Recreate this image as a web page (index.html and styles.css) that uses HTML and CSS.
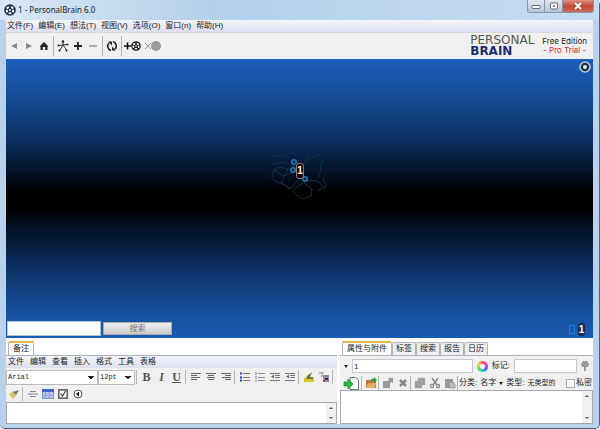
FILE: index.html
```html
<!DOCTYPE html>
<html>
  <head>
    <title>1 - PersonalBrain 6.0</title>
    <meta charset="utf-8">
    <link rel="stylesheet" href="styles.css">
  </head>
  <body>
    <svg class="defs" width="0" height="0">
      <symbol id="brain" viewBox="0 0 12 12">
        <circle cx="6" cy="6" r="5.8" fill="currentColor"/>
        <g fill="#fff">
          <ellipse cx="3.8" cy="3.6" rx="1.5" ry="1.1" transform="rotate(-35 3.8 3.6)"/>
          <ellipse cx="8.2" cy="3.6" rx="1.5" ry="1.1" transform="rotate(35 8.2 3.6)"/>
          <ellipse cx="2.9" cy="7" rx="1.1" ry="1.5"/>
          <ellipse cx="9.1" cy="7" rx="1.1" ry="1.5"/>
          <ellipse cx="6" cy="9.3" rx="1.6" ry="1"/>
          <circle cx="6" cy="6" r="1"/>
        </g>
      </symbol>
      <symbol id="align-left" viewBox="0 0 10 10"><path d="M0 1.5h10M0 3.5h6M0 5.5h9M0 7.5h6" stroke="#666"/></symbol>
      <symbol id="align-center" viewBox="0 0 10 10"><path d="M0 1.5h10M2 3.5h6M1 5.5h8M2 7.5h6" stroke="#666"/></symbol>
      <symbol id="align-right" viewBox="0 0 10 10"><path d="M0 1.5h10M4 3.5h6M1 5.5h9M4 7.5h6" stroke="#666"/></symbol>
      <symbol id="indent" viewBox="0 0 10 10">
        <path d="M0 1.5h10M5 3.5h5M5 5.5h5M0 8.5h10" stroke="#777"/>
        <path d="M4 2.5v4L1 4.5z" fill="#667"/>
      </symbol>
    </svg>

    <div class="window">
      <header class="titlebar">
        <svg class="logo" width="12" height="12"><use href="#brain"/></svg>
        <h1>1 - PersonalBrain 6.0</h1>
        <div class="window-buttons">
          <button class="minimize" aria-label="Minimize"><svg width="10" height="6"><rect x="1" y="2.5" width="8" height="3" rx="1" fill="#fff" stroke="#667"/></svg></button>
          <button class="maximize" aria-label="Maximize"><svg width="10" height="8"><rect x="1.5" y="1" width="7" height="6" rx="1" fill="#fff" stroke="#667"/><rect x="4" y="3" width="2" height="2" fill="#889"/></svg></button>
          <button class="close" aria-label="Close"><svg width="10" height="8"><path d="M2 1l6 6M8 1L2 7" stroke="#844" stroke-width="3"/><path d="M2 1l6 6M8 1L2 7" stroke="#fff" stroke-width="2"/></svg></button>
        </div>
      </header>

      <div class="client">
        <nav class="menubar main-menu">
          <button>文件(F)</button>
          <button>编辑(E)</button>
          <button>想法(T)</button>
          <button>视图(V)</button>
          <button>选项(O)</button>
          <button>窗口(n)</button>
          <button>帮助(H)</button>
        </nav>

        <div class="toolbar main-toolbar">
          <button aria-label="Back"><svg width="8" height="8"><path d="M7 1v6L1 4z" fill="#888"/></svg></button>
          <button aria-label="Forward"><svg width="8" height="8"><path d="M1 1v6l6-3z" fill="#888"/></svg></button>
          <button aria-label="Home"><svg width="10" height="10"><path d="M5 1l4.500 4.500H8.500V9H6.200V6H3.800V9H1.500V5.500H.5z" fill="#222"/></svg></button>
          <span class="sep"></span>
          <button aria-label="Layout"><svg width="12" height="12" fill="none" stroke="#333"><path d="M6 2v3L2 5.500M6 5l4.500-.5M6 5L3 10M6 5l3.500 5"/><g fill="#222" stroke="none"><circle cx="6" cy="1.500" r="1.200"/><circle cx="1.500" cy="5.500" r="1"/><circle cx="10.500" cy="4.500" r="1"/><circle cx="2.500" cy="10.500" r="1"/><circle cx="9.500" cy="10.500" r="1"/></g></svg></button>
          <button aria-label="Add thought"><svg width="10" height="10"><path d="M5 1v8M1 5h8" stroke="#222" stroke-width="1.800"/></svg></button>
          <button aria-label="Remove thought"><svg width="10" height="10"><path d="M1 5h8" stroke="#999" stroke-width="1.500"/></svg></button>
          <span class="sep"></span>
          <button aria-label="Refresh"><svg width="12" height="12"><path d="M5 10.500C1 9 1 5 3 3M7 1.500c4 1.500 4 5.500 2 7.500" fill="none" stroke="#222" stroke-width="1.600"/><path d="M2 1.500h4V5.500zM10 10.500H6V6.500z" fill="#222"/></svg></button>
          <span class="sep"></span>
          <button class="wide" aria-label="Add brain"><svg width="18" height="12"><path d="M3.500 2.500v7M0 6h7" stroke="#111" stroke-width="1.600"/><use href="#brain" x="7" y="1" width="10" height="10" color="#222"/></svg></button>
          <button class="wide" aria-label="Remove brain"><svg width="18" height="12"><path d="M1 3l6 6M7 3L1 9" stroke="#999"/><circle cx="12" cy="6" r="5" fill="#999"/><path d="M9 4.500h2M13 4h2M10 8h4" stroke="#aaa"/></svg></button>
          <div class="brand">
            <div class="brand-name"><span class="personal">PERSONAL</span><strong>BRAIN</strong></div>
            <div class="edition">Free Edition<span>- Pro Trial -</span></div>
          </div>
        </div>

        <main class="plex">
          <svg class="graph" viewBox="0 0 62 56" width="62" height="56">
            <g fill="none" stroke="#0f3a52" stroke-width="0.8">
              <path d="M3 12c6-3 10 1 15-2s8-3 10 2M4 19l14-2 10 5M4 32c1-8 4-12 16-8M4 33c5 7 11 3 18 11M20 24l-7 14 9 6 8-9M6 24l9 7 12-4"/>
              <path d="M35 20l5-9M38 16c4-4 9-4 15-7M55 14c-5 8 0 10-5 18M55 33l3 8-9 5M37 35l13 1 7 8M35 38c-5 3-8 5-10 9l9 7 9-3 1-7-8-6"/>
            </g>
            <g fill="#06243f" stroke="#1d7ab5" stroke-width="1.500">
              <circle cx="26" cy="17" r="2.300"/><circle cx="25" cy="25" r="2.300"/><circle cx="37" cy="34" r="2.300"/>
            </g>
          </svg>
          <button class="thought">1</button>
          <button class="options" aria-label="Options"><svg width="12" height="12"><circle cx="6" cy="6" r="5" fill="#234" stroke="#bcc6d4" stroke-width="1.600"/><circle cx="6" cy="6" r="2" fill="#dde6f0"/></svg></button>
          <form class="search">
            <input type="text" aria-label="搜索">
            <button type="button">搜索</button>
          </form>
          <div class="history"><span class="pin"></span><button>1</button></div>
        </main>

        <div class="panels">
          <section class="notes">
            <div class="tabs"><button class="active">备注</button></div>
            <nav class="menubar notes-menu">
              <button>文件</button>
              <button>编辑</button>
              <button>查看</button>
              <button>插入</button>
              <button>格式</button>
              <button>工具</button>
              <button>表格</button>
            </nav>
            <div class="toolbar format-bar">
              <select class="font" aria-label="Font"><option>Arial</option></select>
              <select class="size" aria-label="Size"><option>12pt</option></select>
              <span class="sep"></span>
              <button class="letter"><b>B</b></button>
              <button class="letter"><b><i>I</i></b></button>
              <button class="letter"><b><u>U</u></b></button>
              <span class="sep"></span>
              <button aria-label="Left"><svg width="10" height="10"><use href="#align-left"/></svg></button>
              <button aria-label="Center"><svg width="10" height="10"><use href="#align-center"/></svg></button>
              <button aria-label="Right"><svg width="10" height="10"><use href="#align-right"/></svg></button>
              <span class="sep"></span>
              <button aria-label="Bullets"><svg width="10" height="10"><path d="M3 1.500h7M3 5.500h7M3 8.500h7" stroke="#777"/><path d="M0 1.500h2M0 5.500h2M0 8.500h2" stroke="#2440b0" stroke-width="2"/></svg></button>
              <button aria-label="Numbers"><svg width="10" height="10"><path d="M3 1.500h7M3 5.500h7M3 8.500h7" stroke="#888"/><path d="M1 0v3M1 4v3M1 8v2" stroke="#5a74c4"/></svg></button>
              <button aria-label="Outdent"><svg width="10" height="10"><use href="#indent"/></svg></button>
              <button aria-label="Indent"><svg width="10" height="10"><use href="#indent"/></svg></button>
              <span class="sep"></span>
              <button aria-label="Highlight"><svg width="12" height="12"><path d="M1 7h10v4H1z" fill="#d6c624"/><path d="M3 8l1-3 5-4-2 5h3v2z" fill="#7d7427"/></svg></button>
              <button aria-label="Text colour"><svg width="12" height="12"><path d="M1 1h5v1.500H4.500V6H3V2.500H1z" fill="#aaa"/><path d="M5 4h6v7H5z" fill="#8b8ba0"/><path d="M5 9h2v2H5z" fill="#c33"/><path d="M7 7h3v2H7z" fill="#226"/></svg></button>
              <span class="sep"></span>
            </div>
            <div class="toolbar format-bar second">
              <button aria-label="Format painter"><svg width="12" height="12"><path d="M1 6l4-3 4 4-4 4z" fill="#d5c66a"/><path d="M5 4l3 3 3-5z" fill="#75746a"/></svg></button>
              <span class="sep"></span>
              <button aria-label="Rule"><svg width="10" height="10"><path d="M2 2.500h6M0 5h10M2 7.500h6" stroke="#888"/></svg></button>
              <button aria-label="Table"><svg width="12" height="10"><rect x=".5" y=".5" width="11" height="9" fill="#b9c8f4" stroke="#7890d8"/><path d="M0 0h12v3H0z" fill="#3e66c8"/><path d="M3.500 3v7M7.500 3v7M0 6.500h12" stroke="#91a3da"/></svg></button>
              <button aria-label="Check"><svg width="10" height="10"><path d="M.8.8h8.400v8.400H.8z" fill="#fff" stroke="#333" stroke-width="1.200"/><path d="M2.500 4.500l2 2.500 3-5" fill="none" stroke="#333" stroke-width="1.200"/></svg></button>
              <button aria-label="Sound"><svg width="10" height="10"><circle cx="5" cy="5" r="4" fill="#fff" stroke="#555"/><path d="M6 2.500v5L3 5z" fill="#111"/></svg></button>
            </div>
            <div class="editor"><textarea aria-label="备注"></textarea><span class="scroll"></span></div>
          </section>

          <section class="properties">
            <div class="tabs">
              <button class="active">属性与附件</button>
              <button>标签</button>
              <button>搜索</button>
              <button>报告</button>
              <button>日历</button>
            </div>
            <div class="fields">
              <span class="arrow"></span>
              <input class="name" type="text" value="1" aria-label="名字">
              <span class="wheel"></span>
              <label for="label">标记:</label>
              <input class="label" id="label" type="text">
              <svg width="8" height="12"><path d="M2 1h4l2 3-1 3H5v4H3V7H1L0 4z" fill="#999"/></svg>
            </div>
            <div class="toolbar attach-bar">
              <button class="new" aria-label="New"><svg width="16" height="13"><path d="M7 .5h5.500L15.500 3v9.500H7z" fill="#fff" stroke="#777"/><path d="M1 5h4V2l5 5-5 5V9H1z" fill="#2dbb3c" stroke="#177a22" stroke-width=".7"/></svg></button>
              <span class="sep"></span>
              <button aria-label="Open"><svg width="12" height="12"><path d="M1 3h4l1 1h5v7H1z" fill="#b9783a"/><path d="M1 11l2-5h8l-1 5z" fill="#e0ad62"/><path d="M5 4c1-2 3-3 4-2V0l3 3-3 3V4z" fill="#2f9e3a"/></svg></button>
              <span class="sep"></span>
              <button aria-label="Launch"><svg width="12" height="12"><path d="M1 4h7v7H1zM6 1h5v5L9 5 6 7 5 5l2-2z" fill="#999"/></svg></button>
              <button aria-label="Delete"><svg width="10" height="10"><path d="M2 2l6 6M8 2L2 8" stroke="#888" stroke-width="2.500"/></svg></button>
              <span class="sep"></span>
              <button aria-label="Copy"><svg width="12" height="12"><path d="M4 1h7v7H4zM1 4h7v7H1z" fill="#999" stroke="#bbb" stroke-width=".6"/></svg></button>
              <button aria-label="Cut"><svg width="12" height="12"><path d="M3 1l5 7M9 1L4 8" stroke="#888" stroke-width="1.500"/><circle cx="3" cy="9" r="1.600" fill="none" stroke="#888" stroke-width="1.300"/><circle cx="9" cy="9" r="1.600" fill="none" stroke="#888" stroke-width="1.300"/></svg></button>
              <button aria-label="Paste"><svg width="12" height="12"><path d="M1 2h8v9H1z" fill="#999"/><path d="M5 5h4l2 2v4H5z" fill="#bbb" stroke="#888" stroke-width=".7"/></svg></button>
              <span class="sep"></span>
              <span>分类:</span>
              <button class="sort">名字<span class="arrow"></span></button>
              <span>类型:</span>
              <button class="type">无类型的</button>
              <label class="private"><input type="checkbox">私密</label>
            </div>
            <div class="editor"><textarea aria-label="附件"></textarea><span class="scroll"></span></div>
          </section>
        </div>
      </div>
    </div>
  </body>
</html>
```
FILE: styles.css
```css
* {
  box-sizing: border-box;
}

body {
  margin: 0;
  color: #222;
  font-family: "Liberation Sans", "Noto Sans CJK SC", sans-serif;
  font-size: 8px;
  line-height: 12px;
}

button, input, select, textarea {
  margin: 0;
  padding: 0;
  border: 0;
  color: inherit;
  background: none;
  font: inherit;
}

input, textarea {
  background: #fff;
}

svg {
  display: block;
}

.defs {
  position: absolute;
}

.window {
  display: flex;
  flex-direction: column;
  height: 100vh;
  padding: 0 6px 4px;
  border: 1px solid #456488;
  border-width: 0 1px 1px 0;
  border-radius: 5px;
  background: #b9d1ea;
}

/* title bar */

.titlebar {
  display: flex;
  align-items: center;
  gap: 2px;
  height: 20px;
  margin: 0 -6px;
  padding-left: 4px;
  background: linear-gradient(90deg, #d8e7f5, #b4d1ec 35%, #c4dcf2);
}

.logo {
  color: #1d3050;
}

h1 {
  margin: 0;
  font-family: "Noto Sans", sans-serif;
  font-size: 8px;
  font-weight: normal;
}

.window-buttons {
  display: flex;
  align-self: flex-start;
  margin-left: auto;
  margin-right: 5px;
}

.window-buttons button {
  display: flex;
  align-items: center;
  justify-content: center;
  width: 18px;
  height: 13px;
  border: 1px solid #8796a8;
  border-width: 0 1px 1px 0;
  background: linear-gradient(#dfe8f1, #b4c3d3);
}

.window-buttons .minimize {
  border-left-width: 1px;
  border-radius: 0 0 0 3px;
}

.window-buttons .close {
  width: 31px;
  border-radius: 0 0 3px 0;
  background: linear-gradient(#dd9285, #c44735 50%, #d26a55);
}

.client {
  display: flex;
  flex: 1;
  flex-direction: column;
  min-height: 0;
  background: #fff;
}

/* menus and toolbars */

.menubar {
  display: flex;
  flex: none;
  gap: 6px;
  height: 12px;
  padding-left: 2px;
  background: linear-gradient(#f4f5fa, #dcdfef);
}

.main-menu {
  gap: 5px;
  padding-left: 1px;
}

.toolbar {
  display: flex;
  flex: none;
  align-items: center;
  background: #f0f0f0;
}

.toolbar button {
  display: flex;
  align-items: center;
  justify-content: center;
}

.sep {
  width: 1px;
  height: 14px;
  background: #b4b4b4;
}

.main-toolbar {
  height: 27px;
  padding-right: 6px;
  border-top: 1px solid #d8d8d8;
}

.main-toolbar button {
  width: 15px;
}

.main-toolbar .sep {
  height: 20px;
  margin: 0 1px 0 2px;
}

.main-toolbar .wide {
  width: 20px;
}

.brand {
  display: flex;
  align-items: center;
  gap: 8px;
  margin-left: auto;
}

.brand-name {
  display: flex;
  flex-direction: column;
  font-family: "DejaVu Sans", sans-serif;
  font-size: 12px;
  line-height: 11px;
}

.personal {
  color: #555;
}

.brand strong {
  color: #1b2c74;
}

.edition {
  font-family: Inter, sans-serif;
  line-height: 9px;
  text-align: center;
}

.edition span {
  display: block;
  color: #d02b35;
}

/* plex */

.plex {
  display: grid;
  position: relative;
  flex: 1;
  background: linear-gradient(#1c5fb9, #184f9c 12%, #0b2f60 29%, #04142a 40%, #000 47%, #000 54%, #04142a 62%, #0b2f60 74%, #184f9c 90%, #1c5ab0);
}

.graph {
  position: absolute;
  top: 86px;
  left: 262px;
}

.thought {
  position: absolute;
  top: 104px;
  left: 290px;
  width: 8px;
  height: 16px;
  border: 1px solid #a77368;
  border-radius: 3px;
  color: #fff;
  background: #100808;
  font-size: 10px;
  font-weight: bold;
}

.options {
  position: absolute;
  top: 2px;
  right: 2px;
}

.search {
  display: flex;
  align-self: end;
  align-items: center;
  gap: 2px;
  padding: 0 1px 2px;
}

.search input {
  width: 94px;
  height: 15px;
  border: 1px solid #b5c5d8;
}

.search button {
  width: 69px;
  height: 13px;
  border: 1px solid #aaa;
  color: #777;
  background: linear-gradient(#eee, #ccc);
}

.history {
  display: flex;
  position: absolute;
  right: 8px;
  bottom: 2px;
  align-items: center;
  gap: 3px;
}

.pin {
  width: 6px;
  height: 9px;
  border: 1px solid #1782d8;
}

.history button {
  width: 7px;
  height: 13px;
  border-radius: 3px;
  color: #fff;
  background: #102c55;
  font-size: 10px;
  font-weight: bold;
}

/* bottom panels */

.panels {
  display: grid;
  grid-template-rows: minmax(0, 1fr);
  grid-template-columns: 331px 1fr;
  gap: 3px;
  height: 86px;
  padding-top: 3px;
}

.notes, .properties {
  display: flex;
  flex-direction: column;
  min-width: 0;
  background: #f0f0f0;
}

.tabs {
  display: flex;
  flex: none;
  align-items: flex-end;
  height: 15px;
  padding-left: 2px;
  border-bottom: 1px solid #aab4c0;
  background: #fff;
}

.tabs button {
  height: 13px;
  padding: 0 3px;
  border: 1px solid #b4b4b4;
  border-bottom: 0;
  border-radius: 2px 2px 0 0;
  background: #eee;
}

.tabs .active {
  height: 14px;
  padding: 0 4px;
  border-top: 2px solid #e6b843;
  background: #fff;
}

.format-bar {
  height: 18px;
}

.format-bar.second {
  height: 16px;
}

.format-bar button {
  width: 15px;
}

.format-bar .sep {
  margin: 0 2px 0 1px;
}

.format-bar .letter {
  color: #555;
  font-family: "Liberation Serif", serif;
  font-size: 12px;
}

.format-bar select {
  height: 15px;
  padding-left: 1px;
  border: 1px solid #bbb;
  background: conic-gradient(from -45deg at 50% 100%, #222 90deg, transparent 0) no-repeat right 3px center / 6px 3px, #fff;
  font-family: "Liberation Mono", monospace;
  font-size: 7px;
  appearance: none;
}

.format-bar .font {
  width: 92px;
}

.format-bar .size {
  width: 37px;
}

.editor {
  display: flex;
  flex: 1;
  min-height: 0;
  border: 1px solid #a5a9b0;
}

.editor textarea {
  flex: 1;
  min-width: 0;
  height: 100%;
  resize: none;
}

.scroll {
  display: flex;
  flex-direction: column;
  align-items: center;
  justify-content: space-between;
  width: 10px;
  padding: 4px 0;
  background: #f0f0f0;
}

.scroll::before, .scroll::after {
  content: "";
  border: 2px solid transparent;
  border-top: 0;
  border-bottom: 2px solid #555;
}

.scroll::after {
  transform: rotate(180deg);
}

.arrow {
  border: 2px solid transparent;
  border-top: 3px solid #222;
  border-bottom: 0;
}

.fields {
  display: flex;
  flex: none;
  align-items: center;
  gap: 4px;
  height: 20px;
  padding: 0 4px;
}

.fields input {
  height: 14px;
  padding-left: 1px;
  border: 1px solid #c4c8cc;
}

.fields .name {
  flex: 1;
  min-width: 0;
}

.fields .label {
  width: 63px;
}

.wheel {
  width: 11px;
  height: 11px;
  border-radius: 50%;
  background: radial-gradient(#fff 2px, transparent 3px), conic-gradient(#f55, #d4d, #55f, #3cc, #5d5, #ed3, #f55);
}

.attach-bar {
  height: 14px;
  padding: 0 1px;
  white-space: nowrap;
}

.attach-bar button {
  width: 15px;
}

.attach-bar .sep {
  margin-right: 1px;
}

.attach-bar .new {
  width: 20px;
}

.attach-bar .sort, .attach-bar .type {
  gap: 3px;
  width: auto;
  margin: 0 3px;
}

.attach-bar .type {
  font-size: 7px;
}

.private {
  display: flex;
  align-items: center;
  gap: 1px;
  margin-left: auto;
}

.private input {
  width: 9px;
  height: 9px;
  border: 1px solid #aaa;
  appearance: none;
}
```
